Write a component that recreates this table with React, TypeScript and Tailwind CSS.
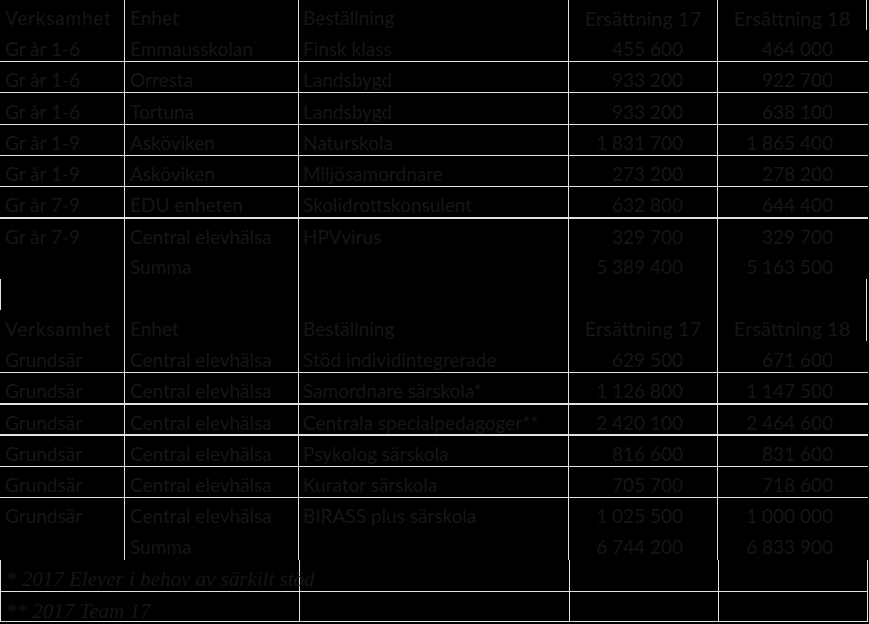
import React from "react";

type Row = {
  cells: string[];
  top?: "thin" | "thick";
  h: 30 | 31 | 32;
  edge?: boolean; // right edge line
  leftEdge?: boolean;
  head?: boolean;
};

const rows: Row[] = [
  { cells: ["Verksamhet", "Enhet", "Beställning", "Ersättning 17", "Ersättning 18"], h: 30, edge: true, head: true },
  { cells: ["Gr år 1-6", "Emmausskolan", "Finsk klass", "455 600", "464 000"], h: 31 },
  { cells: ["Gr år 1-6", "Orresta", "Landsbygd", "933 200", "922 700"], h: 31, top: "thin" },
  { cells: ["Gr år 1-6", "Tortuna", "Landsbygd", "933 200", "638 100"], h: 32, top: "thin" },
  { cells: ["Gr år 1-9", "Asköviken", "Naturskola", "1 831 700", "1 865 400"], h: 31, top: "thin" },
  { cells: ["Gr år 1-9", "Asköviken", "Miljösamordnare", "273 200", "278 200"], h: 31, top: "thin" },
  { cells: ["Gr år 7-9", "EDU enheten", "Skolidrottskonsulent", "632 800", "644 400"], h: 31, top: "thin" },
  { cells: ["Gr år 7-9", "Central elevhälsa", "HPVvirus", "329 700", "329 700"], h: 31, top: "thick" },
  { cells: ["", "Summa", "", "5 389 400", "5 163 500"], h: 31 },
  { cells: ["", "", "", "", ""], h: 31, edge: true, leftEdge: true },
  { cells: ["Verksamhet", "Enhet", "Beställning", "Ersättning 17", "Ersättning 18"], h: 31, edge: true, head: true },
  { cells: ["Grundsär", "Central elevhälsa", "Stöd individintegrerade", "629 500", "671 600"], h: 31 },
  { cells: ["Grundsär", "Central elevhälsa", "Samordnare särskola*", "1 126 800", "1 147 500"], h: 31, top: "thin" },
  { cells: ["Grundsär", "Central elevhälsa", "Centrala specialpedagoger**", "2 420 100", "2 464 600"], h: 31, top: "thick" },
  { cells: ["Grundsär", "Central elevhälsa", "Psykolog särskola", "816 600", "831 600"], h: 32, top: "thick" },
  { cells: ["Grundsär", "Central elevhälsa", "Kurator särskola", "705 700", "718 600"], h: 31, top: "thin" },
  { cells: ["Grundsär", "Central elevhälsa", "BIRASS plus särskola", "1 025 500", "1 000 000"], h: 31, top: "thin" },
  { cells: ["", "Summa", "", "6 744 200", "6 833 900"], h: 32 },
];

const footer = [
  { text: "* 2017  Elever i behov av särkilt stöd", top: false },
  { text: "** 2017 Team 17", top: true },
];

const heightClass = (h: number) => (h === 30 ? "h-[30px]" : h === 32 ? "h-[32px]" : "h-[31px]");
const topClass = (t?: "thin" | "thick") =>
  t === "thin" ? "border-t border-[#e2e2e2]" : t === "thick" ? "border-t-2 border-[#e2e2e2]" : "";

function TableRow({ row }: { row: Row }) {
  const [a, b, c, d, e] = row.cells;
  const align = row.head ? "justify-center text-[20px]" : "justify-end pr-[34px]";
  return (
    <div className={`grid grid-cols-[124px_174px_270px_149px_150px] w-[868px] ${heightClass(row.h)} ${topClass(row.top)}`}>
      <div className={`flex items-center pl-[5px] pt-[5px] whitespace-nowrap ${row.head ? "tracking-[0.8px]" : ""} ${row.leftEdge ? "border-l border-[#e2e2e2]" : ""}`}>{a}</div>
      <div className="flex items-center pl-[5px] pt-[5px] border-l border-[#e2e2e2] whitespace-nowrap">{b}</div>
      <div className="flex items-center pl-[4px] pt-[5px] border-l border-[#e2e2e2] whitespace-nowrap">{c}</div>
      <div className={`flex items-center pt-[5px] border-l border-[#e2e2e2] whitespace-nowrap ${align}`}>{d}</div>
      <div className={`flex items-center pt-[5px] border-l border-[#e2e2e2] whitespace-nowrap ${align} ${row.edge ? "border-r" : ""}`}>{e}</div>
    </div>
  );
}

export default function App() {
  return (
    <div className="w-[869px] h-[624px] bg-black overflow-hidden text-[19px] leading-none text-[#161616] font-['Lato',_'Liberation_Sans',_sans-serif]">
      {rows.map((r, i) => (
        <TableRow key={i} row={r} />
      ))}
      {footer.map((f, i) => (
        <div
          key={i}
          className={`relative grid grid-cols-[298px_270px_149px_150px] w-[868px] h-[31px] border-l border-[#e2e2e2] ${f.top ? "border-t border-b" : ""}`}
        >
          <div className="border-[#e2e2e2]" />
          <div className="border-l border-[#e2e2e2]" />
          <div className="border-l border-[#e2e2e2]" />
          <div className="border-l border-r border-[#e2e2e2]" />
          <span className="absolute left-[5px] top-[9px] whitespace-nowrap italic text-[21px] font-['Liberation_Serif',_serif]">
            {f.text}
          </span>
        </div>
      ))}
    </div>
  );
}
